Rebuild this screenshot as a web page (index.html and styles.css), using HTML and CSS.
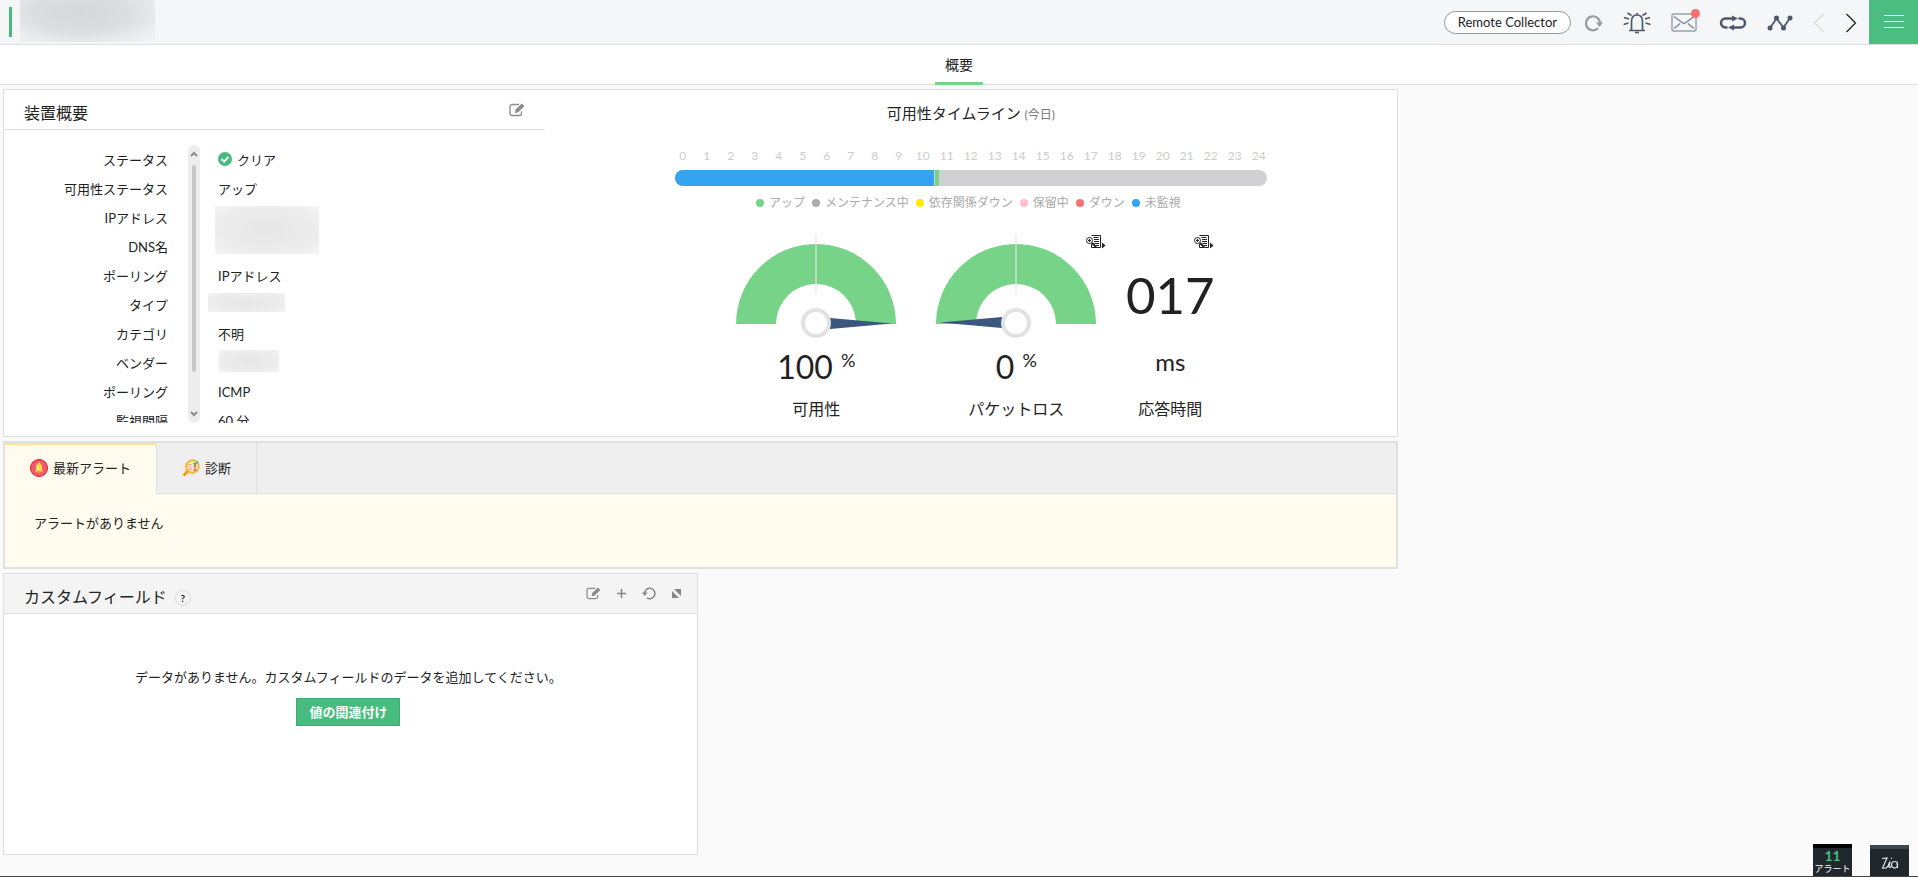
FILE: index.html
```html
<!DOCTYPE html>
<html lang="ja">
<head>
    <meta charset="UTF-8">
    <meta name="viewport" content="width=device-width, initial-scale=1.0">
    <title>装置概要</title>
    <link rel="stylesheet" href="styles.css">
</head>
<body>
    <header class="topbar">
        <span class="status-mark"></span>
        <span class="device-name"></span>
        <div class="toolbar">
            <button type="button" class="pill">Remote Collector</button>
            <button type="button" class="tool" aria-label="更新">
                <svg width="18" height="18" viewBox="0 0 18 18" fill="none" stroke="#949aa1" stroke-width="2.200"><path d="M13 14.200A7 7 0 1 1 15 9"/><path d="M11 8.500h7l-3.500 4.500z" fill="#949aa1" stroke="none"/></svg>
            </button>
            <button type="button" class="tool" aria-label="アラーム">
                <svg width="28" height="22" viewBox="0 0 28 22" fill="none" stroke="#4c596b" stroke-width="1.700"><path d="M6 18.500h16M8.500 18V9.500c0-4 2-6.500 5.500-6.500s5.500 2.500 5.500 6.500V18M14 1v2M12 20.500h4"/><path d="M4.500 1l4 2.500M23.500 1l-4 2.500M1 5.500l5 1.500M27 5.500l-5 1.500M.5 12.500l5-1.500M27.500 12.500l-5-1.500"/></svg>
            </button>
            <button type="button" class="tool mail" aria-label="メール">
                <svg width="26" height="19" viewBox="0 0 26 19" fill="none" stroke="#98a1ab" stroke-width="1.500"><rect x="1" y="1" width="24" height="17" rx="1.500"/><path d="M3 3.500l8 6q2 1.500 4 0l8-6M3 15.500l6-5M23 15.500l-6-5" stroke="#7d8896"/></svg>
                <span class="badge"></span>
            </button>
            <button type="button" class="tool" aria-label="ループ">
                <svg width="28" height="16" viewBox="0 0 28 16" fill="none" stroke="#4c596b" stroke-width="2.500"><path d="M8.500 12.500H6.500a4.500 4.500 0 0 1 0-9H14M19.500 3.500h2a4.500 4.500 0 0 1 0 9H14"/><path d="M13 .5l6 3-6 3zM15 9.500v6l-6-3z" fill="#4c596b" stroke="none"/></svg>
            </button>
            <button type="button" class="tool" aria-label="グラフ">
                <svg width="26" height="16" viewBox="0 0 26 16" fill="none" stroke="#4c596b" stroke-width="1.800"><path d="M3 13L9.500 3.500l7 9L23 3"/><g fill="#4c596b" stroke="none"><circle cx="3" cy="13" r="2.500"/><circle cx="9.500" cy="3" r="2.500"/><circle cx="16.500" cy="13" r="2.500"/><circle cx="23" cy="3" r="2.500"/></g></svg>
            </button>
            <button type="button" class="tool arrow" aria-label="前へ">
                <svg width="12" height="20" viewBox="0 0 12 20" fill="none" stroke="#d8dadc" stroke-width="1.200"><path d="M10.500 1L1.500 10l9 9"/></svg>
            </button>
            <button type="button" class="tool arrow" aria-label="次へ">
                <svg width="12" height="20" viewBox="0 0 12 20" fill="none" stroke="#222" stroke-width="1.300"><path d="M1.500 1l9 9-9 9"/></svg>
            </button>
        </div>
        <button type="button" class="menu" aria-label="メニュー">
            <svg width="20" height="14" viewBox="0 0 20 14" stroke="#fff"><path d="M0 .5h20M0 6.500h20M0 12.500h20"/></svg>
        </button>
    </header>

    <nav class="page-tabs">
        <a href="#" class="page-tab">概要</a>
    </nav>

    <main class="content">
        <section class="card overview">
            <div class="device">
                <div class="device-head">
                    <h2>装置概要</h2>
                    <button type="button" class="icon-btn" aria-label="編集">
                        <svg width="16" height="14" viewBox="0 0 16 14" fill="none" stroke="#8b8b8b" stroke-width="1.300"><path d="M10 1.500H3A2 2 0 0 0 1 3.500v7a2 2 0 0 0 2 2h7.500a2 2 0 0 0 2-2V8.500"/><path d="M6 10l.6-3.500L12.800.5l2.700 2.600L9 9.500z" fill="#8b8b8b" stroke="none"/></svg>
                    </button>
                </div>
                <div class="device-list">
                    <table class="info">
                        <tr><th>ステータス</th><td><svg class="check" width="14" height="14" viewBox="0 0 14 14"><circle cx="7" cy="7" r="7" fill="#47bc7e"/><path d="M3.500 7l2.600 2.600 4.500-4.700" fill="none" stroke="#fff" stroke-width="2"/></svg>クリア</td></tr>
                        <tr><th>可用性ステータス</th><td>アップ</td></tr>
                        <tr><th>IPアドレス</th><td rowspan="2" class="masked"><span class="mask mask-ip"></span></td></tr>
                        <tr><th>DNS名</th></tr>
                        <tr><th>ポーリング</th><td>IPアドレス</td></tr>
                        <tr><th>タイプ</th><td class="masked"><span class="mask mask-type"></span></td></tr>
                        <tr><th>カテゴリ</th><td>不明</td></tr>
                        <tr><th>ベンダー</th><td class="masked"><span class="mask mask-vendor"></span></td></tr>
                        <tr><th>ポーリング</th><td>ICMP</td></tr>
                        <tr><th>監視間隔</th><td>60 分</td></tr>
                    </table>
                    <div class="scrollbar">
                        <svg width="8" height="6" viewBox="0 0 8 6" fill="none" stroke="#8b8b8b" stroke-width="2"><path d="M1 5l3-3 3 3"/></svg>
                        <span class="thumb"></span>
                        <svg width="8" height="6" viewBox="0 0 8 6" fill="none" stroke="#8b8b8b" stroke-width="2"><path d="M1 1l3 3 3-3"/></svg>
                    </div>
                </div>
            </div>

            <div class="availability">
                <h3>可用性タイムライン <small>(今日)</small></h3>
                <div class="timeline">
                    <div class="hours">
                        <span>0</span><span>1</span><span>2</span><span>3</span><span>4</span><span>5</span><span>6</span><span>7</span><span>8</span><span>9</span><span>10</span><span>11</span><span>12</span><span>13</span><span>14</span><span>15</span><span>16</span><span>17</span><span>18</span><span>19</span><span>20</span><span>21</span><span>22</span><span>23</span><span>24</span>
                    </div>
                    <div class="bar">
                        <span class="seg unmonitored" style="width: 43.8%"></span>
                        <span class="seg up" style="width: 0.6%"></span>
                    </div>
                </div>
                <ul class="legend">
                    <li><span class="dot up"></span>アップ</li>
                    <li><span class="dot maintenance"></span>メンテナンス中</li>
                    <li><span class="dot dependent"></span>依存関係ダウン</li>
                    <li><span class="dot pending"></span>保留中</li>
                    <li><span class="dot down"></span>ダウン</li>
                    <li><span class="dot unmonitored"></span>未監視</li>
                </ul>
                <div class="gauges">
                    <div class="gauge">
                        <svg class="dial" width="160" height="106" viewBox="0 0 160 106"><path d="M0 90a80 80 0 0 1 160 0h-40a40 40 0 0 0-80 0z" fill="#77d387"/><path d="M80 0v60" stroke="#e6e6e6" stroke-opacity=".6" stroke-width="2"/><path d="M94 84l62 5.500L94 95z" fill="#3b567f"/><circle cx="80" cy="89" r="13" fill="#fff" stroke="#e2e2e2" stroke-width="4"/></svg>
                        <p class="value">100 <sup>%</sup></p>
                        <p class="name">可用性</p>
                    </div>
                    <div class="gauge">
                        <svg class="dial" width="160" height="106" viewBox="0 0 160 106"><path d="M0 90a80 80 0 0 1 160 0h-40a40 40 0 0 0-80 0z" fill="#77d387"/><path d="M80 0v60" stroke="#e6e6e6" stroke-opacity=".6" stroke-width="2"/><path d="M66 83L4 88.500 66 94z" fill="#3b567f"/><circle cx="80" cy="89" r="13" fill="#fff" stroke="#e2e2e2" stroke-width="4"/></svg>
                        <p class="value">0 <sup>%</sup></p>
                        <p class="name">パケットロス</p>
                        <button type="button" class="report" aria-label="レポート">
                            <svg width="20" height="14" viewBox="0 0 20 14" fill="none" stroke="#222"><path d="M5.500.5h9v12h-9V9M7.500 2.500h5M8 4.500h5M8 6.500h5M8.500 8.500h4.500M10 10.500h3"/><circle cx="3.500" cy="5.500" r="3" fill="#fff"/><path d="M2 5.500h3M3.500 4v3"/><path d="M6 8l4 4" stroke-width="2"/><path d="M16 7.500l3.500 3-3.500 3z" fill="#222" stroke="none"/></svg>
                        </button>
                    </div>
                    <div class="gauge response">
                        <p class="number">017</p>
                        <p class="unit">ms</p>
                        <p class="name">応答時間</p>
                        <button type="button" class="report" aria-label="レポート">
                            <svg width="20" height="14" viewBox="0 0 20 14" fill="none" stroke="#222"><path d="M5.500.5h9v12h-9V9M7.500 2.500h5M8 4.500h5M8 6.500h5M8.500 8.500h4.500M10 10.500h3"/><circle cx="3.500" cy="5.500" r="3" fill="#fff"/><path d="M2 5.500h3M3.500 4v3"/><path d="M6 8l4 4" stroke-width="2"/><path d="M16 7.500l3.500 3-3.500 3z" fill="#222" stroke="none"/></svg>
                        </button>
                    </div>
                </div>
            </div>
        </section>

        <section class="alerts">
            <div class="alert-tabs">
                <button type="button" class="alert-tab active">
                    <svg width="18" height="18" viewBox="0 0 18 18"><circle cx="9" cy="9" r="8.500" fill="#ee5b6c" stroke="#e8192c"/><path d="M4.500 12.500c1.500-1 1.500-2 1.500-4.500 0-2 1-3.500 3-3.500s3 1.500 3 3.500c0 2.500 0 3.500 1.500 4.500z" fill="#ffd54a"/><circle cx="9" cy="4.300" r="1" fill="#ffd54a"/><path d="M7.500 13.200h3a1.500 1.300 0 0 1-3 0z" fill="#f5a623"/><path d="M8 6.500v4.500" stroke="#fff0b0"/></svg>
                    最新アラート
                </button>
                <button type="button" class="alert-tab">
                    <svg width="18" height="18" viewBox="0 0 18 18"><path d="M1 4h7v12H3z" fill="#fbe3d0"/><circle cx="10.500" cy="7.500" r="6.300" fill="#fde3c0" stroke="#e9b62d" stroke-width="1.700"/><path d="M5.800 12.200L1.500 16.500" stroke="#f09a13" stroke-width="2.800"/><path d="M6 5.500h4M6 8h4M7 10.500h3" stroke="#e5b49a"/><path d="M11.500 4l1.500 1.500L16 2.500" fill="none" stroke="#35b36b" stroke-width="1.500"/><path d="M12 6.500l2 2m0-2l-2 2M12 10l2 2m0-2l-2 2" stroke="#ef5a68" stroke-width="1.200"/><path d="M8 16h6" stroke="#f3c9a5" stroke-dasharray="1 1"/></svg>
                    診断
                </button>
            </div>
            <p class="alert-empty">アラートがありません</p>
        </section>

        <section class="card custom">
            <div class="custom-head">
                <h2>カスタムフィールド</h2>
                <button type="button" class="help" aria-label="ヘルプ">?</button>
                <div class="custom-actions">
                    <button type="button" class="icon-btn" aria-label="編集">
                        <svg width="15" height="13" viewBox="0 0 16 14" fill="none" stroke="#8b8b8b" stroke-width="1.300"><path d="M10 1.500H3A2 2 0 0 0 1 3.500v7a2 2 0 0 0 2 2h7.500a2 2 0 0 0 2-2V8.500"/><path d="M6 10l.6-3.500L12.800.5l2.700 2.600L9 9.500z" fill="#8b8b8b" stroke="none"/></svg>
                    </button>
                    <button type="button" class="icon-btn" aria-label="追加">
                        <svg width="9" height="9" viewBox="0 0 9 9" stroke="#858585" stroke-width="1.500"><path d="M4.500 0v9M0 4.500h9"/></svg>
                    </button>
                    <button type="button" class="icon-btn" aria-label="元に戻す">
                        <svg width="14" height="13" viewBox="0 0 14 13" fill="none" stroke="#858585" stroke-width="1.500"><path d="M2.500 6.500a5.200 5.200 0 1 1 2.300 4.300"/><path d="M0 5.500h5.500L2.700 9z" fill="#858585" stroke="none"/></svg>
                    </button>
                    <button type="button" class="icon-btn" aria-label="拡大">
                        <svg width="9" height="9" viewBox="0 0 9 9" fill="#858585"><path d="M2 0h7v7zM0 2v7h7z"/></svg>
                    </button>
                </div>
            </div>
            <div class="custom-body">
                <p>データがありません。カスタムフィールドのデータを追加してください。</p>
                <button type="button" class="primary">値の関連付け</button>
            </div>
        </section>
    </main>

    <div class="dock">
        <button type="button" class="dock-item dock-alert"><strong>11</strong><span>アラート</span></button>
        <button type="button" class="dock-item" aria-label="Zia">
            <svg width="18" height="14" viewBox="0 0 18 14" fill="none" stroke="#e8e8e8" stroke-width="1.200"><path d="M1 2.500L6 2 1.500 12q4 1 5.500-2L9 5.500 8 11q1 1.500 3-1.500"/><path d="M13.500 5.500a3 3.300 0 1 0 .1 6.600 3 3.300 0 0 0 0-6.600M16 5.500l.5 6.500M10 2l1 .5"/></svg>
        </button>
    </div>
</body>
</html>
```
FILE: styles.css
```css
* {
    box-sizing: border-box;
}
body {
    margin: 0;
    min-height: 100vh;
    background: #fafafa;
    border-bottom: 1px solid #444;
    color: #222;
    font-family: Lato, "Noto Sans CJK JP", sans-serif;
    font-size: 13px;
    line-height: 20px;
}
h2, h3, p, ul {
    margin: 0;
    padding: 0;
    font-weight: normal;
}
button {
    padding: 0;
    border: none;
    background: none;
    color: inherit;
    font: inherit;
    cursor: pointer;
}
svg {
    display: block;
}

/* top bar */
.topbar {
    display: flex;
    align-items: center;
    height: 45px;
    padding-left: 9px;
    background: #f4f6f8;
    border-bottom: 1px solid #dedede;
}
.status-mark {
    width: 3px;
    height: 30px;
    background: #47bc7e;
}
.device-name {
    align-self: flex-start;
    width: 135px;
    height: 42px;
    margin-left: 8px;
    background: radial-gradient(ellipse at 45% 30%, #d6d7d8 0%, #dcddde 45%, #f5f6f7 100%);
}
.toolbar {
    display: flex;
    align-items: center;
    margin-left: auto;
    margin-right: 12px;
    padding-top: 1px;
    gap: 20px;
}
.pill {
    height: 23px;
    padding: 0 13px;
    margin-right: -6px;
    border: 1px solid #8c9baa;
    border-radius: 12px;
    background: #fff;
    font-size: 13px;
    line-height: 21px;
}
.mail {
    position: relative;
    margin-right: 2px;
}
.badge {
    position: absolute;
    top: -4px;
    right: -3px;
    width: 9px;
    height: 9px;
    border-radius: 50%;
    background: #fa7070;
}
.menu {
    display: flex;
    align-items: center;
    justify-content: center;
    align-self: stretch;
    width: 49px;
    background: #4bbd80;
}

/* page tabs */
.page-tabs {
    display: flex;
    justify-content: center;
    height: 40px;
    background: #fff;
    border-bottom: 1px solid #dedede;
}
.page-tab {
    height: 40px;
    padding: 0 10px;
    border-bottom: 3px solid #77d387;
    color: #222;
    font-size: 14px;
    line-height: 40px;
    text-decoration: none;
}

.content {
    display: flex;
    flex-direction: column;
    gap: 4px;
    width: 73%;
    padding: 4px 2px 16px 3px;
}
.card {
    background: #fff;
    border: 1px solid #dfdfdf;
}

/* overview */
.overview {
    display: flex;
    height: 348px;
}
.device {
    width: 38.8%;
}
.device-head {
    display: flex;
    align-items: center;
    justify-content: space-between;
    height: 40px;
    padding: 0 20px;
    border-bottom: 1px solid #dfdfdf;
}
h2 {
    font-size: 16px;
    line-height: 24px;
    padding-top: 6px;
}
.device-list {
    display: grid;
    grid-template-columns: 184px 12px 1fr;
    grid-template-rows: 278px;
    margin-top: 15px;
    overflow: hidden;
}
.info {
    grid-area: 1 / 1 / 2 / 4;
    width: 100%;
    height: 290px;
    table-layout: fixed;
    border-collapse: collapse;
}
.info tr {
    height: 29px;
}
.info th {
    width: 164px;
    padding: 0;
    font-weight: normal;
    text-align: right;
}
.info td {
    padding: 0 0 0 50px;
}
.info .masked {
    padding-left: 40px;
    padding-bottom: 4px;
}
.check {
    display: inline-block;
    margin-right: 5px;
    vertical-align: -1px;
}
.mask {
    display: block;
    background: radial-gradient(#e6e6e6, #ededed 70%, #f4f4f4);
}
.mask-ip {
    width: 104px;
    height: 48px;
    margin-left: 7px;
}
.mask-type {
    width: 77px;
    height: 19px;
}
.mask-vendor {
    width: 60px;
    height: 22px;
    margin-left: 11px;
}
.scrollbar {
    grid-area: 1 / 2;
    display: flex;
    flex-direction: column;
    align-items: center;
    padding: 6px 0;
    border-radius: 6px;
    background: #ededed;
}
.thumb {
    width: 4px;
    height: 207px;
    margin: 8px 0 auto;
    border-radius: 2px;
    background: #c8c8c8;
}

/* availability */
.availability {
    flex: 1;
    display: flex;
    flex-direction: column;
    align-items: center;
    padding-top: 11px;
}
h3 {
    font-size: 15px;
    line-height: 24px;
}
h3 small {
    color: #777;
    font-size: 12px;
}
.timeline {
    width: 70%;
    max-width: 592px;
    margin-top: 19px;
}
.hours {
    display: flex;
    justify-content: space-between;
    margin-right: -4px;
    margin-left: -4px;
    color: #ccc;
    font-size: 12px;
}
.hours span {
    width: 24px;
    text-align: center;
}
.bar {
    display: flex;
    gap: 1px;
    height: 16px;
    margin-top: 4px;
    border-radius: 8px;
    background: #d0d0d2;
    overflow: hidden;
}
.unmonitored {
    background: #32a4f2;
}
.up {
    background: #77d387;
}
.maintenance {
    background: #adadad;
}
.dependent {
    background: #ffed00;
}
.pending {
    background: #ffc0cb;
}
.down {
    background: #f87070;
}
.legend {
    display: flex;
    gap: 7px;
    margin-top: 7px;
    padding-right: 5px;
    color: #aaa;
    font-size: 12px;
    list-style: none;
}
.legend li {
    display: flex;
    align-items: center;
    gap: 5px;
}
.dot {
    width: 8px;
    height: 8px;
    border-radius: 50%;
}
.gauges {
    display: flex;
    margin-top: 21px;
    padding-right: 1px;
}
.gauge {
    position: relative;
    display: flex;
    flex-direction: column;
    align-items: center;
    width: 200px;
}
.response {
    width: 108px;
}
.value {
    margin-top: 6px;
    font-size: 32px;
    line-height: 42px;
}
.value sup {
    font-size: 18px;
    line-height: 18px;
}
.name {
    margin-top: 9px;
    font-size: 16px;
    line-height: 24px;
}
.number {
    margin-top: 29px;
    font-size: 51px;
    line-height: 64px;
}
.unit {
    margin-top: 15px;
    margin-bottom: 6px;
    font-size: 24px;
    line-height: 40px;
}
.report {
    position: absolute;
    top: 1px;
    right: 10px;
}

/* alerts */
.alerts {
    border: 2px solid #e0e0e0;
    background: #fffbee;
}
.alert-tabs {
    display: flex;
    height: 51px;
    background: #efefef;
}
.alert-tab {
    display: flex;
    align-items: center;
    gap: 5px;
    padding: 0 25px;
    border-right: 1px solid #dfdfdf;
    border-bottom: 1px solid #dfdfdf;
}
.alert-tab.active {
    padding-bottom: 3px;
    border-top: 2px solid #ffe291;
    border-bottom: none;
    background: #fffbee;
}
.alert-tabs::after {
    content: "";
    flex: 1;
    border-bottom: 1px solid #dfdfdf;
}
.alert-empty {
    padding: 19px 29px 34px;
}

/* custom fields */
.custom {
    width: 49.8%;
    height: 282px;
}
.custom-head {
    display: flex;
    align-items: center;
    height: 40px;
    padding: 0 16px 0 20px;
    border-bottom: 1px solid #dfdfdf;
    background: #f4f4f4;
}
.help {
    width: 16px;
    height: 16px;
    margin: 8px 0 0 8px;
    border: 1px solid #d8d8d8;
    border-radius: 50%;
    font-size: 10px;
    font-weight: bold;
    line-height: 14px;
}
.custom-actions {
    display: flex;
    align-items: center;
    gap: 16px;
    margin-left: auto;
}
.custom-body {
    display: flex;
    flex-direction: column;
    align-items: center;
    gap: 11px;
    padding: 53px 4px 0 0;
}
.primary {
    height: 28px;
    padding: 0 12px;
    border: 1px solid #3cae72;
    background: #47bc7e;
    color: #fff;
    font-weight: bold;
}

/* bottom dock */
.dock {
    position: fixed;
    right: 9px;
    bottom: 1px;
    display: flex;
    align-items: flex-end;
    gap: 18px;
}
.dock-item {
    display: flex;
    flex-direction: column;
    align-items: center;
    justify-content: center;
    width: 39px;
    height: 31px;
    border-top: 4px solid #3c4a50;
    background: #20282e;
    color: #fff;
    font-size: 9px;
    line-height: 12px;
    white-space: nowrap;
}
.dock-alert {
    height: 32px;
    border-top-color: #000;
}
.dock-alert strong {
    color: #47bc7e;
    font-size: 14px;
    line-height: 14px;
}
```
